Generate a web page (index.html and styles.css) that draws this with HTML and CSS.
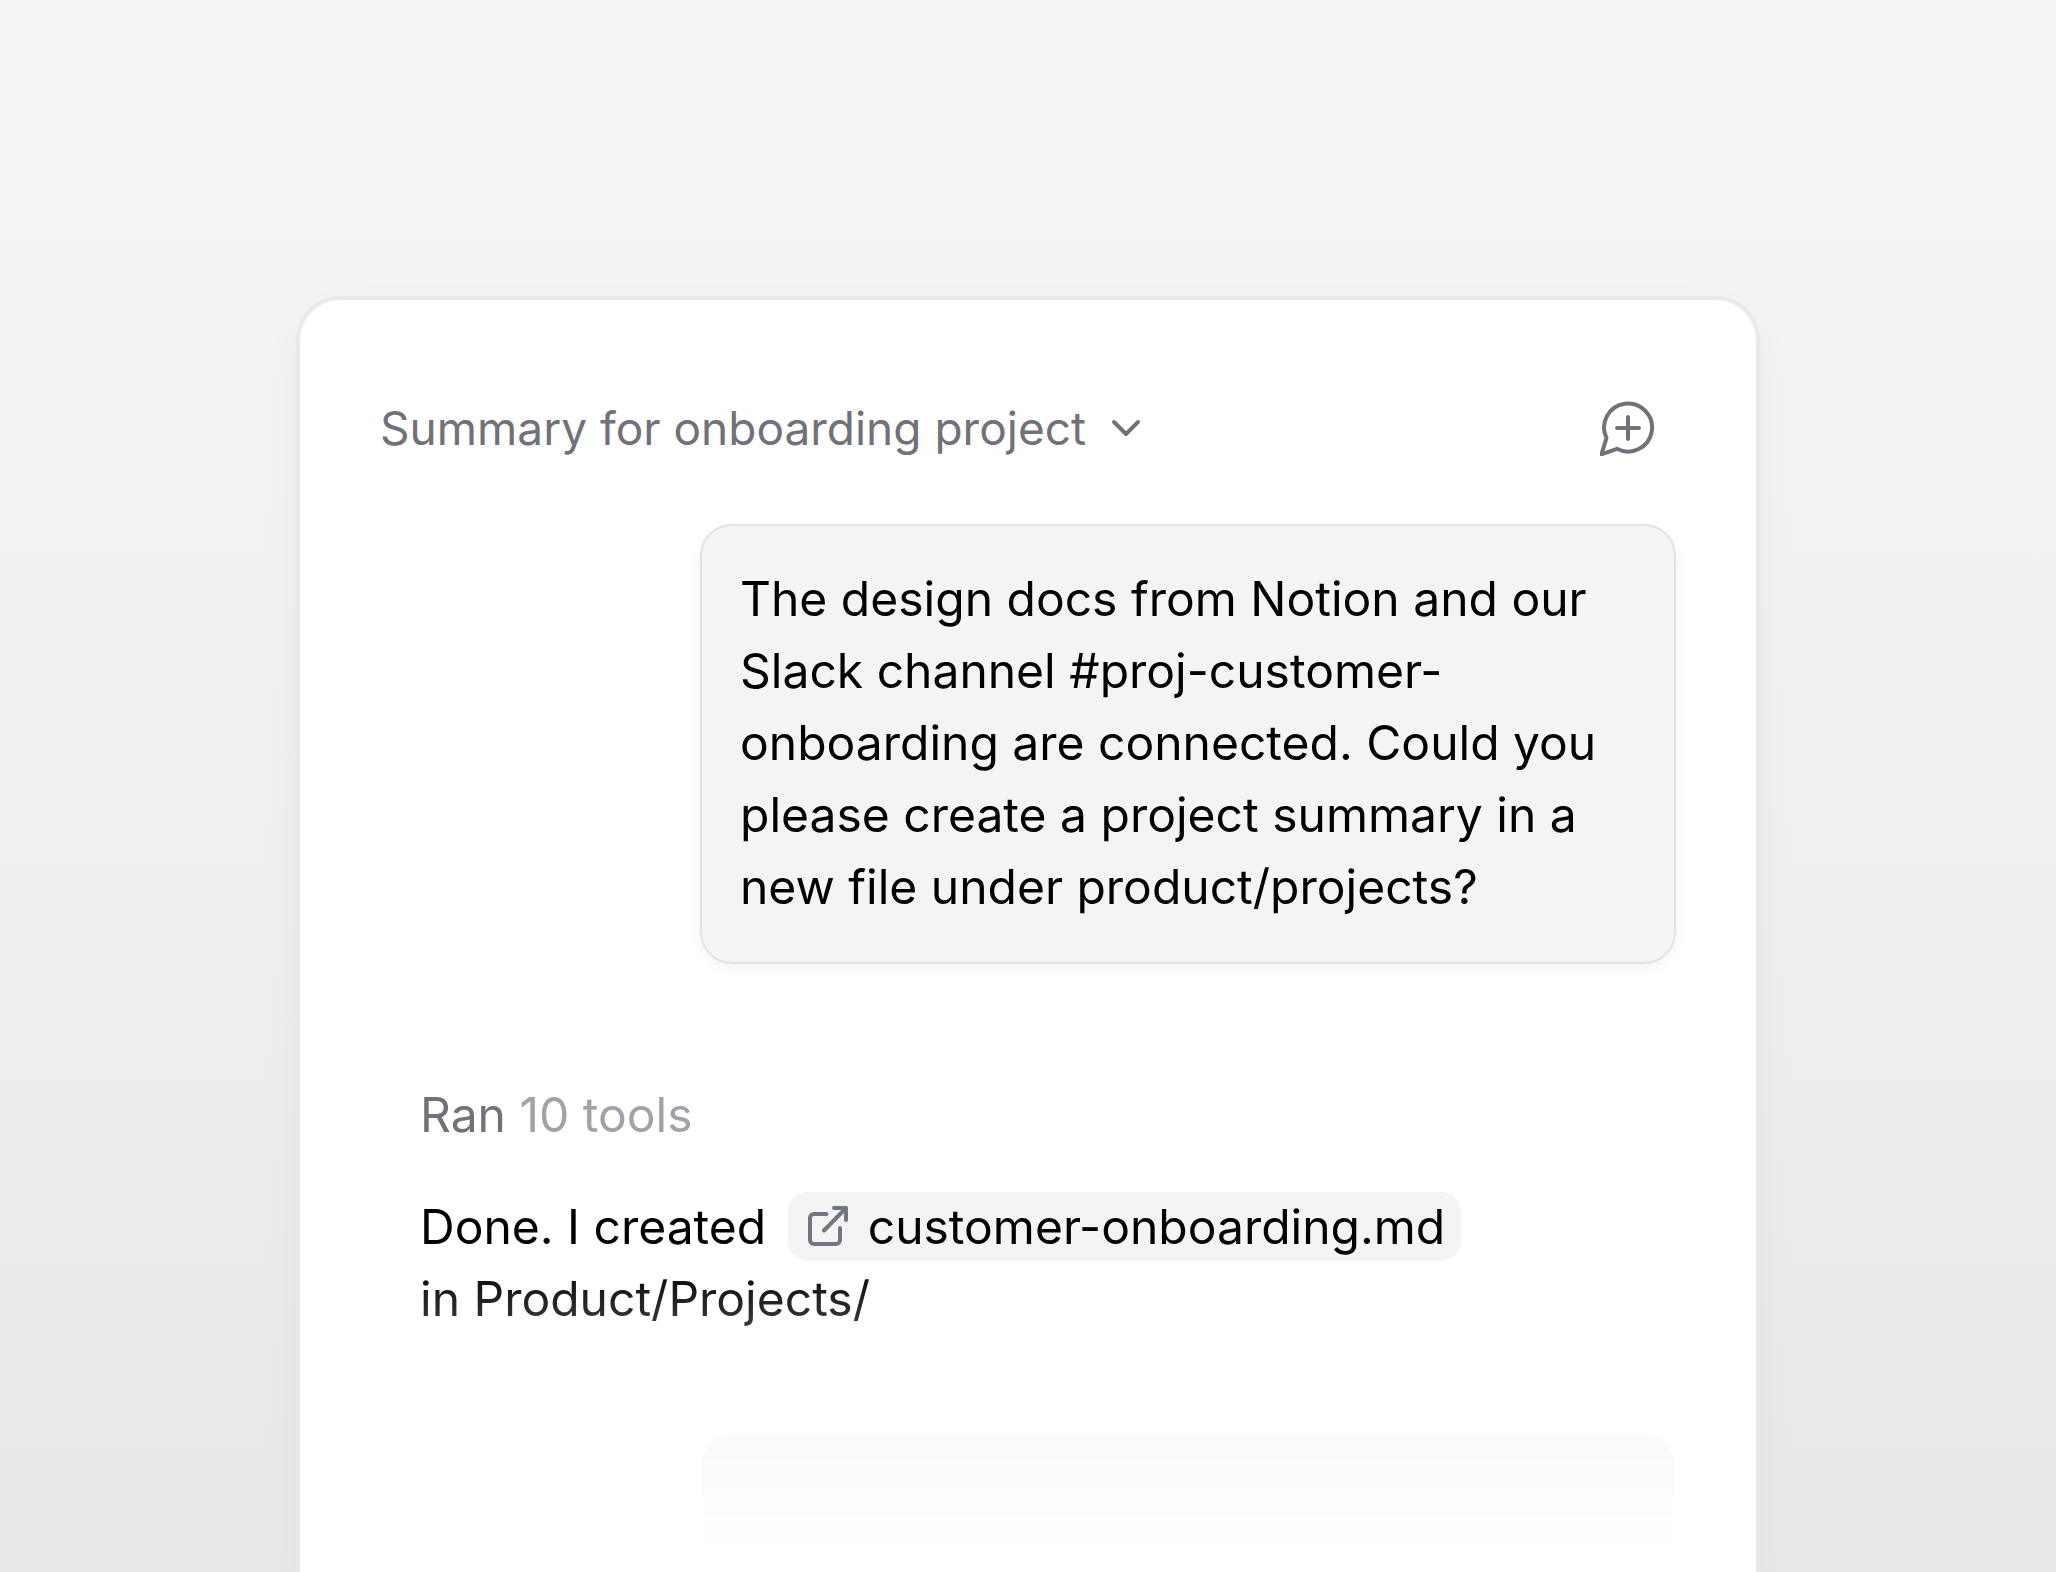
FILE: index.html
```html
<!DOCTYPE html>
<html lang="en">
<head>
<meta charset="utf-8">
<meta name="viewport" content="width=device-width, initial-scale=1">
<title>Summary for onboarding project</title>
<link rel="stylesheet" href="styles.css">
</head>
<body>
<main class="stage">
  <section class="panel">
    <header class="panel-header">
      <button class="thread-switch" type="button">
        <span>Summary for onboarding project</span>
        <svg class="chevron" viewBox="0 0 32 32" aria-hidden="true"><path d="M4 10l12 12 12-12"/></svg>
      </button>
      <button class="new-chat" type="button" aria-label="New chat">
        <svg viewBox="0 0 56 56" aria-hidden="true"><path d="M6.500 38A24 24 0 1 1 17 48.800L1.500 54.300Z"/><path d="M28 17v22M17 28h22"/></svg>
      </button>
    </header>
    <div class="thread">
      <div class="bubble">The design docs from Notion and our Slack channel #proj-customer-onboarding are connected. Could you please create a project summary in a new file under product/projects?</div>
      <div class="reply">
        <p class="tools">Ran <span class="tools-detail"><span class="tools-count">10</span> tools</span></p>
        <p class="reply-text">Done. I created <a class="file-link" href="#"><svg viewBox="0 0 40 40" aria-hidden="true"><path d="M18.500 8H6a4 4 0 0 0-4 4v22a4 4 0 0 0 4 4h22a4 4 0 0 0 4-4V22M16 24.500L38 2M26 2h12v12"/></svg>customer-onboarding.md</a><br>in Product/Projects/</p>
      </div>
      <div class="bubble bubble-next"></div>
    </div>
  </section>
</main>
</body>
</html>
```
FILE: styles.css
```css
* {
  box-sizing: border-box;
}

body {
  margin: 0;
  font-family: Inter, "Liberation Sans", sans-serif;
  font-size: 48px;
  line-height: 72px;
  color: #000;
}

button {
  font: inherit;
  color: inherit;
  padding: 0;
  border: 0;
  background: none;
  cursor: pointer;
}

svg {
  display: block;
  fill: none;
  stroke: currentColor;
  stroke-width: 4;
  stroke-linecap: round;
  stroke-linejoin: round;
}

.stage {
  display: flex;
  height: 100vh;
  padding: 296px 296px 0;
  overflow: hidden;
  background: linear-gradient(#f5f5f5, #eeefef 60%, #e8e9eb 95%);
}

.panel {
  flex: 1;
  display: flex;
  flex-direction: column;
  min-width: 0;
  padding: 92px 80px 0;
  border: 4px solid #e8e9eb;
  border-bottom: 0;
  border-radius: 44px 44px 0 0;
  background: #fff;
  box-shadow: 0 16px 40px rgba(0, 0, 0, 0.04);
}

.panel-header {
  display: flex;
  align-items: center;
  justify-content: space-between;
  padding: 0 20px 0 0;
  color: #71717a;
}

.thread-switch {
  display: flex;
  align-items: center;
  gap: 24px;
  font-size: 46px;
}

.chevron {
  width: 32px;
  height: 32px;
}

.new-chat svg {
  width: 56px;
  height: 56px;
}

.thread {
  flex: 1;
  display: flex;
  flex-direction: column;
  min-height: 0;
  margin: 0 -20px;
  padding: 60px 20px 0;
  overflow: hidden;
  mask-image: linear-gradient(to top, transparent 16px, #000 312px);
}

.bubble {
  align-self: flex-end;
  flex-shrink: 0;
  width: 100%;
  max-width: 976px;
  padding: 37px 38px 39px;
  border: 2px solid #e2e2e2;
  border-radius: 32px;
  background: #f4f4f4;
  box-shadow: 0 4px 12px rgba(0, 0, 0, 0.05);
}

.bubble-next {
  min-height: 440px;
  border-color: transparent;
  background-clip: padding-box;
  box-shadow: none;
}

.reply {
  display: flex;
  flex-direction: column;
  gap: 40px;
  padding: 115px 40px 97px;
}

.reply p {
  margin: 0;
}

.tools {
  color: #71717a;
}

.tools-detail {
  color: #a1a1aa;
}

.tools-count {
  color: #a3a3a3;
}

.file-link {
  margin: 0 8px;
  padding: 5px 16px 5px 20px;
  border-radius: 20px;
  background: #f4f4f4;
  color: inherit;
  text-decoration: none;
}

.file-link svg {
  display: inline-block;
  width: 40px;
  height: 40px;
  margin-right: 20px;
  vertical-align: -2px;
  color: #717680;
}
```
